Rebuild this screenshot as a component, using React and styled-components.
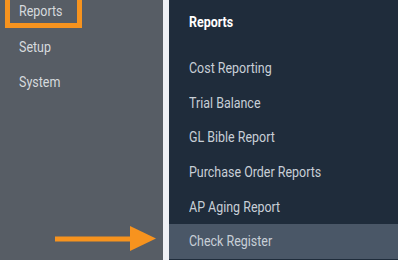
import React from "react";
import styled, { createGlobalStyle } from "styled-components";

const GlobalStyle = createGlobalStyle`
    html, body {
        margin: 0;
        padding: 0;
        width: 398px;
        height: 260px;
        overflow: hidden;
        font-family: Roboto, "Liberation Sans", sans-serif;
    }
`;

const mainItems = ["Reports", "Setup", "System"];

const reportItems = [
    "Cost Reporting",
    "Trial Balance",
    "GL Bible Report",
    "Purchase Order Reports",
    "AP Aging Report",
    "Check Register",
];

const App = () => {
    return (
        <Wrapper>
            <GlobalStyle />
            <Sidebar>
                <NavList>
                    {mainItems.map((item, i) => (
                        <NavItem key={item} $highlighted={i === 0}>
                            <Label>{item}</Label>
                        </NavItem>
                    ))}
                </NavList>
            </Sidebar>
            <Divider />
            <SubMenu>
                <SubHeading>
                    <Label>Reports</Label>
                </SubHeading>
                <SubList>
                    {reportItems.map((item, i) => (
                        <SubItem
                            key={item}
                            $active={i === reportItems.length - 1}
                        >
                            <Label>{item}</Label>
                        </SubItem>
                    ))}
                </SubList>
            </SubMenu>
            <Arrow width="102" height="26" viewBox="0 0 102 26">
                <rect x="0" y="10.5" width="78" height="5" fill="#f7931e" />
                <polygon points="75,0 101,12.5 75,25" fill="#f7931e" />
            </Arrow>
        </Wrapper>
    );
};

const Wrapper = styled.div`
    position: relative;
    width: 398px;
    height: 260px;
    display: grid;
    grid-template-columns: 163px 6px 1fr;
    overflow: hidden;
`;

// condensed look of the original typeface
const Label = styled.span`
    display: inline-block;
    white-space: nowrap;
    transform: scaleX(0.89);
    transform-origin: left center;
`;

const Sidebar = styled.div`
    background-color: #575d65;
`;

const NavList = styled.ul`
    list-style: none;
    margin: -6px 0 0 0;
    padding: 0;
`;

const NavItem = styled.li`
    box-sizing: border-box;
    height: 35px;
    display: flex;
    align-items: center;
    padding-left: 19px;
    font-size: 14px;
    color: #d6dade;

    ${props =>
        props.$highlighted &&
        `
        width: 77px;
        height: 34px;
        margin: 0 0 1px 5px;
        padding-left: 9px;
        border: 5px solid #f7931e;
    `}
`;

const Divider = styled.div`
    background-color: #eef0f5;
`;

const SubMenu = styled.div`
    background-color: #1f2c3b;
    padding-top: 4px;
    display: flex;
    flex-direction: column;
`;

const SubHeading = styled.div`
    height: 35px;
    display: flex;
    align-items: center;
    padding-left: 20px;
    margin-bottom: 12px;
    font-size: 14px;
    font-weight: 700;
    color: #ffffff;
`;

const SubList = styled.ul`
    list-style: none;
    margin: 0;
    padding: 0;
`;

const SubItem = styled.li`
    height: 34.6px;
    display: flex;
    align-items: center;
    padding-left: 20px;
    font-size: 14px;
    color: #c8cfd7;
    background-color: ${props => (props.$active ? "#4a5767" : "transparent")};
`;

const Arrow = styled.svg`
    position: absolute;
    left: 55px;
    top: 226px;
`;

export default App;
